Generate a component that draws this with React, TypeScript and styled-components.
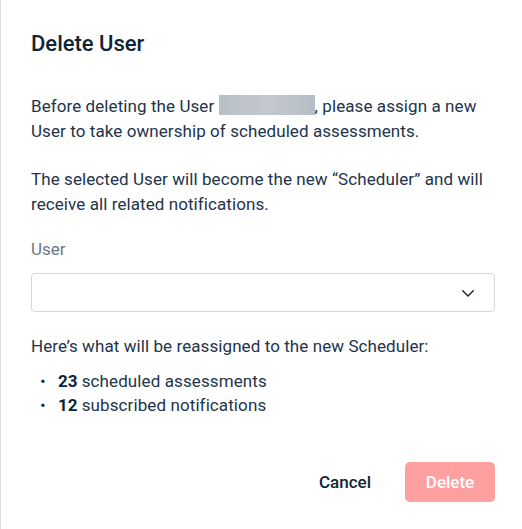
import styled, { createGlobalStyle } from "styled-components";

const GlobalStyle = createGlobalStyle`
  html, body {
    margin: 0;
    padding: 0;
    background: #ffffff;
  }
  body {
    font-family: Roboto, "Liberation Sans", sans-serif;
  }
`;

function ChevronDown() {
  return (
    <svg width="18" height="18" viewBox="0 0 24 24" fill="none">
      <path
        d="M5 9l7 7 7-7"
        stroke="#1b2b3a"
        strokeWidth="2"
        strokeLinecap="round"
        strokeLinejoin="round"
      />
    </svg>
  );
}

export default function App() {
  return (
    <>
      <GlobalStyle />
      <Modal>
        <Title>Delete User</Title>

        <Body>
          <Paragraph>
            Before deleting the User <Redacted />, please assign a new User to
            take ownership of scheduled assessments.
          </Paragraph>
          <Paragraph $gap={21}>
            The selected User will become the new “Scheduler” and will receive
            all related notifications.
          </Paragraph>

          <Field>
            <Label>User</Label>
            <SelectBox>
              <ChevronDown />
            </SelectBox>
          </Field>

          <Paragraph>Here’s what will be reassigned to the new Scheduler:</Paragraph>
          <List>
            <Item>
              <strong>23</strong> scheduled assessments
            </Item>
            <Item>
              <strong>12</strong> subscribed notifications
            </Item>
          </List>
        </Body>

        <Footer>
          <GhostButton>Cancel</GhostButton>
          <DangerButton disabled>Delete</DangerButton>
        </Footer>
      </Modal>
    </>
  );
}

const Modal = styled.div`
  box-sizing: border-box;
  width: 522px;
  height: 529px;
  border-left: 1px solid #dcdfe2;
  padding: 29px 27px 0 30px;
  display: flex;
  flex-direction: column;
  color: #22344a;
`;

const Title = styled.h2`
  margin: 0;
  font-size: 22px;
  font-weight: 500;
  line-height: 29px;
  color: #0f2537;
`;

const Body = styled.div`
  margin-top: 36px;
  display: flex;
  flex-direction: column;
`;

const Paragraph = styled.p<{ $gap?: number }>`
  margin: 0 0 ${(p) => p.$gap ?? 23}px;
  font-size: 17px;
  letter-spacing: 0.08px;
  line-height: 25px;
  color: #22344a;
`;

const Redacted = styled.span`
  display: inline-block;
  width: 96px;
  height: 20px;
  vertical-align: -3px;
  background: linear-gradient(90deg, #b8c0c8, #c2c8cd 50%, #b6bec6);
`;

const Field = styled.div`
  display: flex;
  flex-direction: column;
  gap: 13px;
  margin: 0 0 22px;
`;

const Label = styled.label`
  font-size: 17px;
  line-height: 22px;
  color: #6a7786;
`;

const SelectBox = styled.div`
  box-sizing: border-box;
  height: 39px;
  border: 1px solid #d3d7db;
  border-radius: 4px;
  display: flex;
  align-items: center;
  justify-content: flex-end;
  padding-right: 17px;
`;

const List = styled.ul`
  margin: -13px 0 0;
  padding: 0 0 0 9px;
  list-style: none;
  font-size: 17px;
  letter-spacing: 0.1px;
  line-height: 24px;
  color: #22344a;

  strong {
    font-weight: 700;
    color: #0f2537;
  }
`;

const Item = styled.li`
  display: flex;
  gap: 5px;

  &::before {
    content: "•";
    width: 13px;
  }

  strong {
    margin-right: -1px;
  }
`;

const Footer = styled.div`
  margin-top: auto;
  margin-bottom: 27px;
  display: flex;
  justify-content: flex-end;
  align-items: center;
  gap: 14px;
`;

const GhostButton = styled.button`
  border: none;
  background: transparent;
  font-family: inherit;
  font-size: 17px;
  font-weight: 500;
  color: #0f2537;
  padding: 0 20px;
  height: 40px;
`;

const DangerButton = styled.button`
  border: none;
  border-radius: 5px;
  background: #ffa0a0;
  color: #ffffff;
  font-family: inherit;
  font-size: 17px;
  font-weight: 500;
  width: 90px;
  height: 40px;
`;
